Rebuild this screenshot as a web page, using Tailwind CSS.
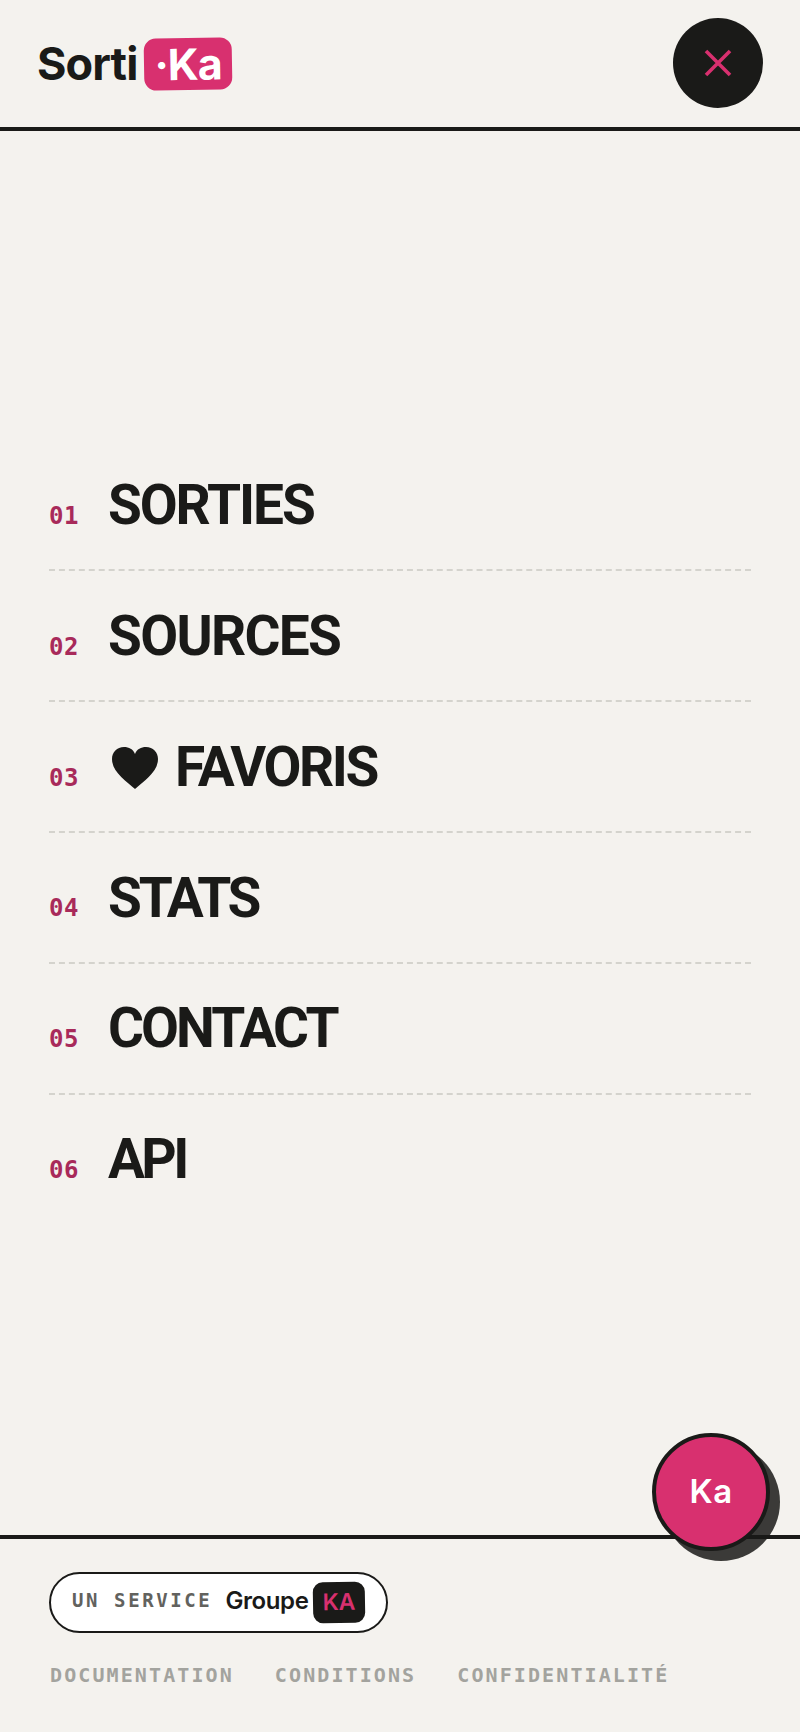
<!DOCTYPE html>
<html lang="fr">
<head>
<meta charset="utf-8">
<script src="https://cdn.jsdelivr.net/npm/@tailwindcss/browser@4"></script>
</head>
<body class="bg-[#f4f2ee]">
<div class="relative flex h-[1732px] w-[800px] flex-col overflow-hidden bg-[#f4f2ee] text-[#1a1a18] font-['Inter',sans-serif]">
  <header class="flex h-[131px] shrink-0 items-start justify-between border-b-[4px] border-[#1a1a18] pl-[37px] pr-[37px] pt-[18px]">
    <div class="mt-[20px] flex items-center">
      <span class="w-[107px] text-[45px] leading-[52px] font-bold tracking-[-0.9px]">Sorti</span>
      <span class="flex h-[52px] w-[88px] rotate-[-1deg] items-center justify-center rounded-[12px] bg-[#d8306f] text-[43px] leading-[52px] font-bold tracking-[-1px] text-white">·Ka</span>
    </div>
    <button class="flex h-[90px] w-[90px] items-center justify-center rounded-full bg-[#1a1a18]">
      <svg width="28" height="28" viewBox="0 0 28 28" fill="none" stroke="#d8306f" stroke-width="3.6"><path d="M2 2L26 26M26 2L2 26"/></svg>
    </button>
  </header>
  <main class="flex flex-1 flex-col justify-center px-[49px]">
    <nav class="flex flex-col">
      <a class="flex h-[131px] items-center gap-[27px] border-b-2 border-dashed border-[#d4d3cd]"><span class="mt-[23px] w-[32px] font-['DejaVu_Sans_Mono',monospace] text-[24px] font-bold tracking-[0.5px] text-[#a82a5a]">01</span><span class="mt-[2px] text-[55px] font-bold tracking-[-2.1px] font-['Roboto',sans-serif]">SORTIES</span></a>
      <a class="flex h-[131px] items-center gap-[27px] border-b-2 border-dashed border-[#d4d3cd]"><span class="mt-[22px] w-[32px] font-['DejaVu_Sans_Mono',monospace] text-[24px] font-bold tracking-[0.5px] text-[#a82a5a]">02</span><span class="mt-[2px] text-[55px] font-bold tracking-[-1.7px] font-['Roboto',sans-serif]">SOURCES</span></a>
      <a class="flex h-[131px] items-center gap-[27px] border-b-2 border-dashed border-[#d4d3cd]"><span class="mt-[22px] w-[32px] font-['DejaVu_Sans_Mono',monospace] text-[24px] font-bold tracking-[0.5px] text-[#a82a5a]">03</span><span class="mt-[2px] flex items-center gap-[17px] text-[55px] font-bold tracking-[-2.4px] font-['Roboto',sans-serif]"><svg class="ml-[4px]" width="46" height="42" viewBox="0 0 46 42" fill="#1a1a18"><path d="M23 42C14 34 0 25 0 12C0 5 5 0 12 0C17 0 21 2 23 7C25 2 29 0 34 0C41 0 46 5 46 12C46 25 32 34 23 42Z"/></svg>FAVORIS</span></a>
      <a class="flex h-[131px] items-center gap-[27px] border-b-2 border-dashed border-[#d4d3cd]"><span class="mt-[20px] w-[32px] font-['DejaVu_Sans_Mono',monospace] text-[24px] font-bold tracking-[0.5px] text-[#a82a5a]">04</span><span class="mt-[2px] text-[55px] font-bold tracking-[-3.2px] font-['Roboto',sans-serif]">STATS</span></a>
      <a class="flex h-[131px] items-center gap-[27px] border-b-2 border-dashed border-[#d4d3cd]"><span class="mt-[20px] w-[32px] font-['DejaVu_Sans_Mono',monospace] text-[24px] font-bold tracking-[0.5px] text-[#a82a5a]">05</span><span class="mt-[0px] text-[55px] font-bold tracking-[-2.9px] font-['Roboto',sans-serif]">CONTACT</span></a>
      <a class="flex h-[131px] items-center gap-[27px]"><span class="mt-[18px] w-[32px] font-['DejaVu_Sans_Mono',monospace] text-[24px] font-bold tracking-[0.5px] text-[#a82a5a]">06</span><span class="mt-[-2px] text-[55px] font-bold tracking-[-3.6px] font-['Roboto',sans-serif]">API</span></a>
    </nav>
  </main>
  <footer class="h-[197px] shrink-0 border-t-[4px] border-[#1a1a18] px-[49px] pt-[33px]">
    <div class="flex h-[61px] w-[339px] items-center rounded-full border-2 border-[#1a1a18] bg-white pl-[21px] pb-[4px]">
      <span class="font-['DejaVu_Sans_Mono',monospace] text-[19px] font-bold tracking-[2.6px] text-[#62625e]">UN SERVICE</span>
      <span class="ml-[13px] text-[24px] font-semibold tracking-[-0.4px]">Groupe</span>
      <span class="ml-[5px] mt-[4px] flex h-[41px] w-[52px] rotate-[-1deg] items-center justify-center rounded-[10px] bg-[#1a1a18] text-[23px] font-semibold text-[#d8306f]">KA</span>
    </div>
    <div class="mt-[27px] ml-[1px] flex gap-[41px] font-['DejaVu_Sans_Mono',monospace] text-[20px] font-bold tracking-[2.1px] text-[#a3a39e]">
      <span>DOCUMENTATION</span><span>CONDITIONS</span><span>CONFIDENTIALITÉ</span>
    </div>
  </footer>
  <button class="absolute left-[652px] top-[1433px] flex h-[118px] w-[118px] items-center justify-center rounded-full border-[4px] border-[#1a1a18] bg-[#d8306f] text-[33px] font-semibold tracking-[0.5px] text-white shadow-[10px_10px_0_rgba(26,26,24,0.85)]">Ka</button>
</div>
</body>
</html>
